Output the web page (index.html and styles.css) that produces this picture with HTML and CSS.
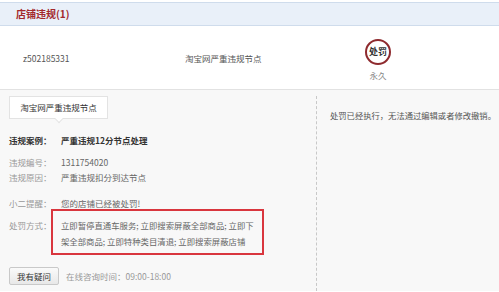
FILE: index.html
```html
<!DOCTYPE html>
<html lang="zh-CN">
<head>
    <meta charset="UTF-8">
    <title>店铺违规</title>
    <link rel="stylesheet" href="styles.css">
</head>
<body>
    <div class="title-bar">店铺违规(1)</div>

    <div class="record">
        <div class="cell cell-id">z502185331</div>
        <div class="cell">淘宝网严重违规节点</div>
        <div class="cell cell-punish">
            <div class="stamp">处罚</div>
            <div class="term">永久</div>
        </div>
    </div>

    <div class="detail">
        <div class="detail-left">
            <div class="tab">淘宝网严重违规节点</div>

            <div class="line line-case">
                <span class="label">违规案例：</span>
                <span class="value">严重违规12分节点处理</span>
            </div>
            <div class="line line-first">
                <span class="label">违规编号：</span>
                <span class="value">1311754020</span>
            </div>
            <div class="line">
                <span class="label">违规原因：</span>
                <span class="value">严重违规扣分到达节点</span>
            </div>
            <div class="line line-tip">
                <span class="label">小二提醒：</span>
                <span class="value">您的店铺已经被处罚!</span>
            </div>
            <div class="line line-punish">
                <span class="label">处罚方式：</span>
                <div class="punish-box">立即暂停直通车服务; 立即搜索屏蔽全部商品; 立即下<br>架全部商品; 立即特种类目清退; 立即搜索屏蔽店铺</div>
            </div>

            <div class="ask">
                <button class="ask-btn">我有疑问</button>
                <span class="ask-time">在线咨询时间：09:00-18:00</span>
            </div>
        </div>
        <div class="detail-right">处罚已经执行，无法通过编辑或者修改撤销。</div>
    </div>
</body>
</html>
```

FILE: styles.css
```css
body {
    margin: 0;
    font-family: "Noto Sans CJK SC", "Liberation Sans", sans-serif;
    font-size: 8.5px;
    color: #666;
    background-color: #ffffff;
    overflow: hidden;
}
.title-bar {
    margin-top: 2px;
    height: 22px;
    line-height: 22px;
    padding-left: 16px;
    background-color: #e9f0f9;
    border-top: 1px solid #cfdcec;
    border-bottom: 1px solid #cfdcec;
    color: #a3282c;
    font-size: 10px;
    font-weight: bold;
}
.record {
    display: grid;
    grid-template-columns: 185px 150px 86px;
    align-items: center;
    height: 63px;
    border-bottom: 1px solid #e2e2e2;
    color: #555;
}
.cell-id {
    padding-left: 23px;
}
.cell-punish {
    display: flex;
    flex-direction: column;
    align-items: center;
    padding-top: 4px;
}
.stamp {
    width: 22px;
    height: 22px;
    border: 2px solid #8e2a2e;
    border-radius: 50%;
    display: flex;
    align-items: center;
    justify-content: center;
    color: #333;
    font-weight: bold;
    font-size: 9px;
}
.term {
    margin-top: 4px;
    color: #888;
}
.detail {
    display: flex;
    background-color: #f8f8f8;
    height: 201px;
}
.detail-left {
    width: 307px;
    flex-shrink: 0;
    margin-top: 6px;
    padding-left: 9px;
    border-right: 1px dashed #c8c8c8;
}
.tab {
    position: relative;
    width: 97px;
    height: 21px;
    line-height: 21px;
    text-align: center;
    background-color: #ffffff;
    border: 1px solid #e3e3e3;
    color: #333;
}
.tab::after {
    content: "";
    position: absolute;
    left: 46px;
    bottom: -4px;
    width: 5px;
    height: 5px;
    background-color: #ffffff;
    border-right: 1px solid #e3e3e3;
    border-bottom: 1px solid #e3e3e3;
    transform: rotate(45deg);
}
.line {
    display: flex;
    line-height: 15px;
}
.label {
    width: 52px;
    flex-shrink: 0;
    color: #999;
}
.line-case {
    margin-top: 14px;
    font-weight: bold;
}
.line-case .label,
.line-case .value {
    color: #333;
}
.line-first {
    margin-top: 7px;
}
.line-tip {
    margin-top: 11px;
}
.line-punish {
    margin-top: -2px;
}
.line-punish .label {
    padding-top: 8px;
    line-height: 16px;
}
.punish-box {
    width: 193px;
    margin-left: -10px;
    padding: 6px 8px 4px 8px;
    border: 2px solid #d9363e;
    font-size: 8.4px;
    line-height: 16px;
    white-space: nowrap;
}
.ask {
    display: flex;
    align-items: center;
    gap: 7px;
    margin-top: 12px;
}
.ask-btn {
    width: 50px;
    height: 18px;
    padding: 0;
    font-family: inherit;
    font-size: 8.5px;
    color: #333;
    background: linear-gradient(#fafafa, #e8e8e8);
    border: 1px solid #c9c9c9;
    border-radius: 2px;
}
.ask-time {
    color: #999;
}
.detail-right {
    margin-top: 6px;
    padding: 12px 0 0 13px;
    line-height: 15px;
    font-size: 8.3px;
    color: #555;
    white-space: nowrap;
}
```
